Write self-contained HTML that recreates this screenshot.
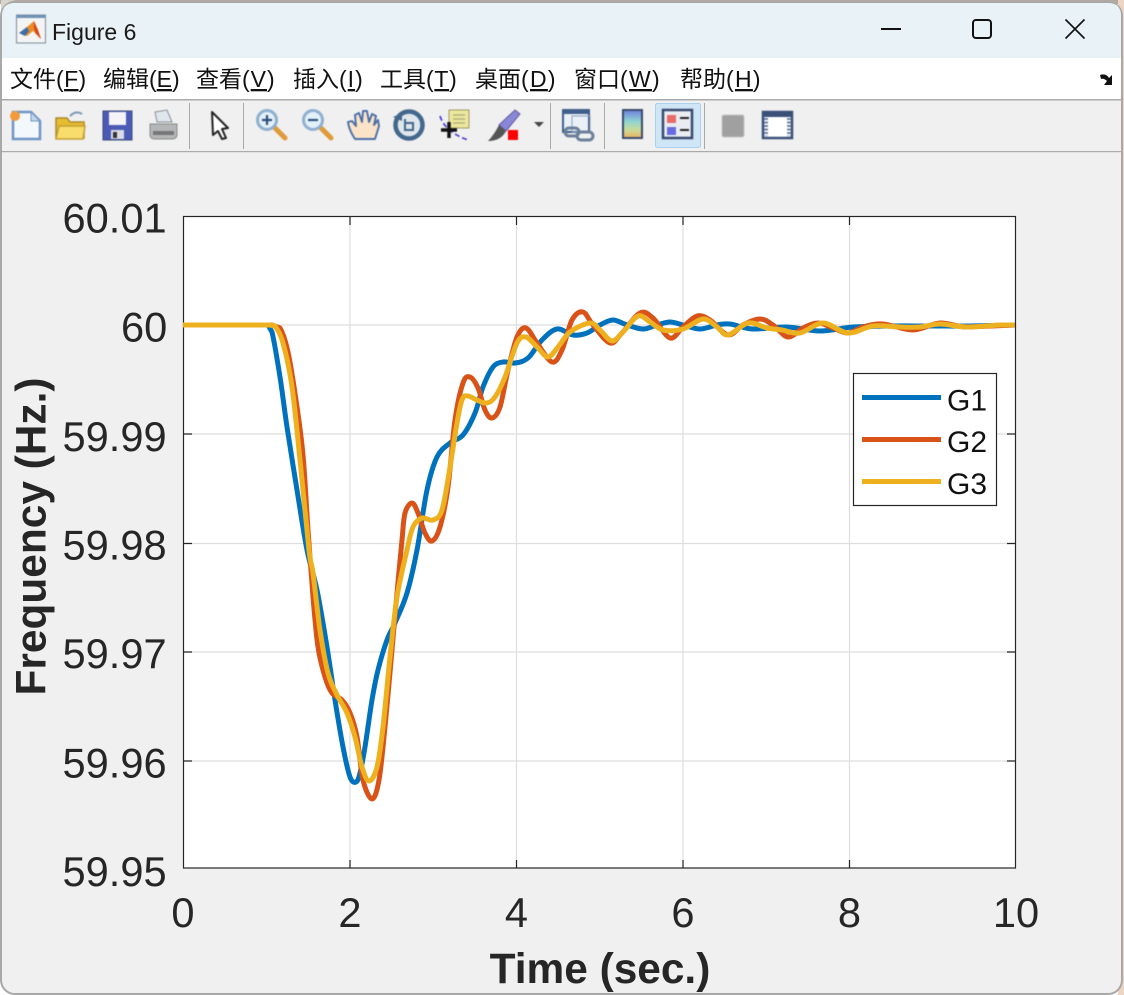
<!DOCTYPE html>
<html><head><meta charset="utf-8"><title>Figure 6</title>
<style>
html,body{margin:0;padding:0;width:1124px;height:995px;overflow:hidden;background:#fff}
svg{display:block;position:absolute;left:0;top:0}
text{font-family:"Liberation Sans","Noto Sans CJK SC",sans-serif}
.m{font-size:23px;fill:#111}
.t{font-size:41.6px;fill:#262626}
.l{font-size:42.4px;font-weight:bold;fill:#262626}
.c{fill:none;stroke-width:5;stroke-linejoin:round;stroke-linecap:butt}
.ic{filter:blur(.4px)}
</style></head><body>
<svg width="1124" height="995" viewBox="0 0 1124 995" xmlns="http://www.w3.org/2000/svg">
<rect width="1124" height="995" fill="#ffffff"/>
<rect x="0" y="0" width="1124" height="4" fill="#b3a9a0"/>
<rect x="1118" y="0" width="6" height="995" fill="#ecd5c4"/>
<path d="M0 0H16Q2 2 1 16V0Z" fill="#d9d3cd"/>
<rect x="1" y="2" width="1121" height="992" rx="14" fill="#f0f0f0" stroke="#a8a8a8" stroke-width="2"/>
<path d="M2 58V16Q2 3 15 3H1108Q1121 3 1121 16V58Z" fill="#e9f2f6"/>
<rect x="2" y="58" width="1119" height="41" fill="#fff"/>
<rect x="2" y="99" width="1119" height="1.5" fill="#aaa"/>
<rect x="2" y="151" width="1119" height="1.2" fill="#aaa"/>

<!-- title icon -->
<g class="ic">
<rect x="16.500" y="15" width="29" height="28" fill="#f4f4f4" stroke="#7b8a99"/>
<rect x="16" y="15" width="30" height="3" fill="#6f93b5"/>
<path d="M19 33L27 27L34 21L38 30L41 39L36 34L33 31L27 36Z" fill="#ee8a24"/>
<path d="M19 33L27 27L29 31L25 36Z" fill="#3a6fa8"/>
<path d="M34 21L38 30L41 39L36 34L34 28Z" fill="#d4481c"/>
</g>
<text x="52" y="40" style="font-size:23px" fill="#1a1a1a">Figure 6</text>

<!-- window controls -->
<rect x="881" y="28" width="20" height="2" fill="#111"/>
<rect x="973" y="20" width="18" height="18" rx="3" fill="none" stroke="#111" stroke-width="2"/>
<path d="M1065.500 19.500L1084.500 38.500M1084.500 19.500L1065.500 38.500" stroke="#111" stroke-width="1.600" fill="none"/>

<!-- menu -->
<text class="m" x="10" y="87">文件<tspan letter-spacing=".4">(<tspan text-decoration="underline">F</tspan>)</tspan></text>
<text class="m" x="103" y="87">编辑(<tspan text-decoration="underline">E</tspan>)</text>
<text class="m" x="196" y="87">查看<tspan letter-spacing="1">(<tspan text-decoration="underline">V</tspan>)</tspan></text>
<text class="m" x="293" y="87">插入<tspan letter-spacing="1">(<tspan text-decoration="underline">I</tspan>)</tspan></text>
<text class="m" x="380" y="87">工具<tspan letter-spacing=".7">(<tspan text-decoration="underline">T</tspan>)</tspan></text>
<text class="m" x="475" y="87">桌面<tspan letter-spacing="1.300">(<tspan text-decoration="underline">D</tspan>)</tspan></text>
<text class="m" x="574" y="87">窗口<tspan letter-spacing="1.300">(<tspan text-decoration="underline">W</tspan>)</tspan></text>
<text class="m" x="680" y="87">帮助<tspan letter-spacing="1.300">(<tspan text-decoration="underline">H</tspan>)</tspan></text>
<path d="M1100 75Q1106 73 1109 78L1112 75V85H1104L1107 81Q1104 78 1101 79Z" fill="#111"/>

<!-- toolbar separators -->
<g fill="#a9a9a9"><rect x="189" y="103" width="1" height="46"/><rect x="243" y="103" width="1" height="46"/><rect x="550" y="103" width="1" height="46"/><rect x="604" y="103" width="1" height="46"/><rect x="704" y="103" width="1" height="46"/></g>

<rect x="655.500" y="103.500" width="45" height="44" rx="2" fill="#cfe6f7" stroke="#a9d0ee"/>
<g class="ic">
<!-- new -->
<path d="M13 112H31L40 121V139H13Z" fill="#f3f8fd" stroke="#6f93c4" stroke-width="2.500"/>
<path d="M31 112V121H40Z" fill="#c5d6ea" stroke="#6f93c4"/>
<circle cx="15" cy="116" r="5" fill="#f39a3c"/>
<!-- open -->
<path d="M56 118H67L70 122H84V138H56Z" fill="#e8bc30" stroke="#a98a2c" stroke-width="1.500"/>
<path d="M56 139L59 126H85L83 139Z" fill="#f8dc6c" stroke="#c4a030" stroke-width="1.500"/>
<path d="M70 116Q76 110 82 114" fill="none" stroke="#7d97b4" stroke-width="2"/>
<!-- save -->
<rect x="103" y="111" width="29" height="29" fill="#4b5bb5" stroke="#3a4a78"/>
<rect x="109" y="112" width="17" height="13" fill="#f3f3f8"/>
<rect x="111" y="130" width="13" height="9" fill="#dcdce8"/><rect x="113" y="132" width="4" height="6" fill="#333"/>
<!-- print -->
<path d="M155 112L167 110L172 122H157Z" fill="#dfe6ee" stroke="#8a8f94"/>
<path d="M150 124H177V134Q177 139 172 139H155Q150 139 150 134Z" fill="#b4b6b8" stroke="#8a8a8a"/>
<rect x="153" y="131" width="21" height="4" fill="#777"/>
<!-- cursor -->
<path d="M212 112L228 128L222 129L226 138L222 139L218 131L213 135Z" fill="#fff" stroke="#222" stroke-width="2" stroke-linejoin="round"/>
<!-- zoom in -->
<path d="M274 127L285 138" stroke="#e09a3a" stroke-width="5" stroke-linecap="round"/>
<circle cx="267" cy="120" r="9.500" fill="#e3f0fa" stroke="#8fb0cf" stroke-width="3"/>
<path d="M262 120H272M267 115V125" stroke="#2e4f7c" stroke-width="2.200"/>
<!-- zoom out -->
<path d="M320 127L331 138" stroke="#e09a3a" stroke-width="5" stroke-linecap="round"/>
<circle cx="313" cy="120" r="9.500" fill="#e3f0fa" stroke="#8fb0cf" stroke-width="3"/>
<path d="M308 120H318" stroke="#2e4f7c" stroke-width="2.200"/>
<!-- hand -->
<path d="M355 139Q349 130 348 122L352 121L356 126L355 115L359 113L362 122L363 111L367 111L369 122L372 114L376 116L374 125L378 120L379 126L375 139Z" fill="#fbe3c8" stroke="#4a6ea8" stroke-width="1.900" stroke-linejoin="round"/>
<!-- rotate -->
<circle cx="409" cy="125" r="13.500" fill="#dfe6ec" stroke="#44688c" stroke-width="4.500"/>
<path d="M393 117L402 113L402 121Z" fill="#44688c"/>
<path d="M405 119V130H413V123H405" fill="none" stroke="#44688c" stroke-width="2"/>
<!-- data cursor -->
<path d="M440 116Q445 132 468 140" fill="none" stroke="#3a2fd0" stroke-width="1.600" stroke-dasharray="5 3"/>
<rect x="449" y="110" width="20" height="18" fill="#ede79c" stroke="#9c9c6a"/>
<path d="M453 115H465M453 119H465M453 123H465" stroke="#a8a878" stroke-width="1.300"/>
<path d="M449 122V138M441 130H457" stroke="#111" stroke-width="3.500"/>
<!-- brush -->
<path d="M499 125L515 110L520 114L506 131Z" fill="#8a87d8" stroke="#5d5a9c"/>
<path d="M499 125L506 131Q501 141 488 141Q494 135 499 125Z" fill="#555"/>
<rect x="508" y="130" width="10" height="10" fill="#f00"/>
<path d="M534 122H544L539 127Z" fill="#444"/>
<!-- link -->
<rect x="563" y="110" width="26" height="22" fill="#eaf0f6" stroke="#3f5f8c" stroke-width="2"/>
<rect x="563" y="110" width="26" height="4" fill="#3f5f8c"/>
<rect x="572" y="116" width="18" height="16" fill="none" stroke="#89a0bc"/>
<rect x="565" y="128" width="14" height="8" rx="4" fill="none" stroke="#6a7f99" stroke-width="3"/>
<rect x="577" y="132" width="16" height="8" rx="4" fill="none" stroke="#6a7f99" stroke-width="3"/>
<!-- colorbar -->
<defs><linearGradient id="g" x1="0" y1="0" x2="0" y2="1"><stop offset="0" stop-color="#6f7de0"/><stop offset=".4" stop-color="#8fd4d0"/><stop offset=".7" stop-color="#c8dc9a"/><stop offset="1" stop-color="#f0b060"/></linearGradient></defs>
<rect x="623" y="110" width="19" height="28" fill="url(#g)" stroke="#3a4a6e" stroke-width="2"/>
<!-- legend active -->
<rect x="663" y="110" width="29" height="28" fill="#e9edf2" stroke="#38496e" stroke-width="2.500"/>
<rect x="667" y="115" width="9" height="8" fill="#e86a6a"/><rect x="667" y="127" width="9" height="8" fill="#6a6ae0"/>
<path d="M680 118H689M680 130H689" stroke="#222" stroke-width="2"/>
<!-- grey square -->
<rect x="722" y="115" width="22" height="22" rx="2" fill="#a0a0a0" stroke="#c4c4c4"/>
<!-- window -->
<rect x="763" y="112" width="29" height="26" fill="#fff" stroke="#3a5078" stroke-width="2.500"/>
<rect x="763" y="112" width="29" height="5" fill="#3a5078"/>
<path d="M766 118V136M789 118V136" stroke="#6d81a0" stroke-width="4" stroke-dasharray="2 1.500"/>
</g>

<!-- axes -->
<rect x="183.500" y="216.500" width="832" height="651.500" fill="#fff"/>
<g stroke="#dedede" stroke-width="1.200">
<path d="M350 217V868M516.500 217V868M683 217V868M849.500 217V868"/>
<path d="M184 325H1015M184 434H1015M184 543.500H1015M184 652H1015M184 761H1015"/>
</g>

<polyline id="a" class="c" stroke="#0072bd" points="183,325 268,325 272,332 280,377 287,427 297,490 307,550 317,590 327,647 335,700 343,747 350,777 356,782 360,773 365,747 372,700 378,670 387,640 395,623 407,593 417,550 427,490 437,457 450,443 463,435 475,413 483,387 493,367 503,362 515,363 528,358 542,340 557,329 573,335 587,333 600,325 613,320 627,325 643,329 657,325 670,322 683,325 700,329 717,325 730,324 753,329 787,327 820,331 853,327 890,326 930,326 970,326 1016,325"/>
<polyline id="b" class="c" stroke="#d95319" points="183,325 272,325 280,328 288,352 296,400 303,455 308,530 313,597 318,647 325,677 332,693 342,700 350,713 357,737 363,780 372,799 379,780 385,727 392,650 397,593 402,540 405,513 412,503 418,513 425,533 432,541 440,527 448,487 455,420 463,383 470,377 478,388 485,410 492,418 500,407 508,370 517,337 526,328 537,343 552,362 562,350 572,320 583,312 593,325 610,343 622,333 640,313 653,318 670,338 683,327 697,316 710,320 728,335 743,325 760,319 773,325 788,337 803,328 818,323 833,328 848,333 863,327 883,324 913,330 940,323 967,327 1016,325"/>
<polyline id="c" class="c" stroke="#edb120" points="183,325 270,325 275,326 283,343 292,387 300,460 309,550 313,573 320,630 328,673 337,695 347,713 355,737 362,767 369,781 377,767 383,727 390,657 397,597 407,550 413,527 422,518 433,520 442,510 450,467 457,423 462,400 468,396 485,403 495,397 505,377 517,343 526,337 537,347 548,357 558,347 570,332 590,323 600,330 612,341 623,332 638,316 650,322 663,330 683,329 703,319 717,327 728,335 748,323 767,328 782,330 800,333 823,323 848,333 873,326 900,327 920,327 940,324 967,327 1000,325 1016,325"/>

<rect x="183.500" y="216.500" width="832" height="651.500" fill="none" stroke="#262626" stroke-width="1.200"/>
<path d="M183 325h6" stroke="#edb120" stroke-width="5"/>
<g stroke="#262626" stroke-width="1.200">
<path d="M184 434h8M184 543.500h8M184 652h8M184 761h8M1015 434h-8M1015 543.500h-8M1015 652h-8M1015 761h-8"/>
<path d="M350 868v-8M516.500 868v-8M683 868v-8M849.500 868v-8M350 217v8M516.500 217v8M683 217v8M849.500 217v8"/>
</g>

<!-- tick labels -->
<g>
<text class="t" x="62.500" y="232.500">60.01</text>
<text class="t" x="121" y="341.500">60</text>
<text class="t" x="62.500" y="451">59.99</text>
<text class="t" x="62.500" y="559.500">59.98</text>
<text class="t" x="62.500" y="668">59.97</text>
<text class="t" x="62.500" y="777.500">59.96</text>
<text class="t" x="62.500" y="886">59.95</text>
<text class="t" x="183" y="927" text-anchor="middle">0</text>
<text class="t" x="350" y="927" text-anchor="middle">2</text>
<text class="t" x="516.500" y="927" text-anchor="middle">4</text>
<text class="t" x="683" y="927" text-anchor="middle">6</text>
<text class="t" x="849.500" y="927" text-anchor="middle">8</text>
<text class="t" x="1016" y="927" text-anchor="middle">10</text>
</g>
<text class="l" x="600" y="983" text-anchor="middle">Time (sec.)</text>
<text class="l" transform="translate(45.500 536.500) rotate(-90)" text-anchor="middle">Frequency (Hz.)</text>

<!-- legend -->
<rect x="853.500" y="373.500" width="143" height="132" fill="#fff" stroke="#262626" stroke-width="1.200"/>
<path d="M862 397.500H941" stroke="#0072bd" stroke-width="5"/>
<path d="M862 439.500H941" stroke="#d95319" stroke-width="5"/>
<path d="M862 481.500H941" stroke="#edb120" stroke-width="5"/>
<g style="font-size:30px" fill="#111">
<text x="947" y="410.500">G1</text>
<text x="947" y="452">G2</text>
<text x="947" y="494">G3</text>
</g>
</svg>
<script>
['a','b','c'].forEach(function(id){
  var el=document.getElementById(id);
  var p=el.getAttribute('points').trim().split(/\s+/).map(function(s){return s.split(',').map(Number)});
  var d='M'+p[0][0]+' '+p[0][1];
  for(var i=0;i<p.length-1;i++){
    var p0=p[i-1]||p[i],p1=p[i],p2=p[i+1],p3=p[i+2]||p2;
    var k=(i<2||i>p.length-3)?0:1/6;
    d+=' C'+(p1[0]+(p2[0]-p0[0])*k)+' '+(p1[1]+(p2[1]-p0[1])*k)+' '+(p2[0]-(p3[0]-p1[0])*k)+' '+(p2[1]-(p3[1]-p1[1])*k)+' '+p2[0]+' '+p2[1];
  }
  var n=document.createElementNS('http://www.w3.org/2000/svg','path');
  n.setAttribute('d',d);n.setAttribute('class','c');n.setAttribute('stroke',el.getAttribute('stroke'));
  el.parentNode.replaceChild(n,el);
});
</script>
</body></html>
